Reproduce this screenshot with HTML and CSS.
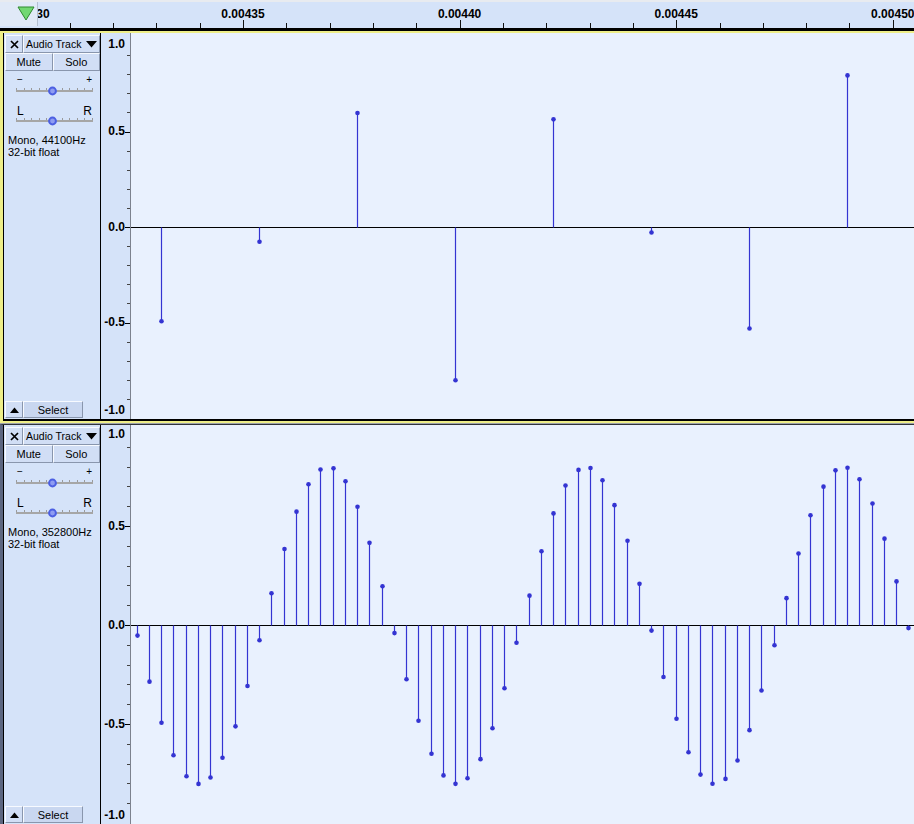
FILE: index.html
```html
<!DOCTYPE html>
<html>
<head>
<meta charset="utf-8">
<title>Audio Tracks</title>
<link rel="stylesheet" href="styles.css">
</head>
<body>
<div class="app">
  <div class="ruler">
    <div class="ruler-corner">
      <svg class="play-head" width="18" height="15" viewBox="0 0 18 15"><path d="M1 1H17L9 14Z" fill="#72d872" stroke="#2f8a2f" stroke-width="1"/></svg>
    </div>
    <div class="ruler-scale">
      <svg class="ruler-ticks" width="900" height="26"></svg>
      <span class="rlabel" style="left:-10px">0.00430</span>
      <span class="rlabel" style="left:205px">0.00435</span>
      <span class="rlabel" style="left:421.6px">0.00440</span>
      <span class="rlabel" style="left:638.2px">0.00445</span>
      <span class="rlabel" style="left:854.8px">0.00450</span>
    </div>
  </div>

  <div class="track track--focused">
    <div class="panel">
      <div class="row row-title">
        <div class="btn btn-close"><svg width="9" height="9" viewBox="0 0 9 9"><path d="M1 1L8 8M8 1L1 8" stroke="#000" stroke-width="1.7"/></svg></div>
        <div class="btn btn-name"><span>Audio Track</span><svg width="11" height="7" viewBox="0 0 11 7"><path d="M0 0H11L5.5 6.5Z" fill="#000"/></svg></div>
      </div>
      <div class="row row-toggles">
        <div class="btn btn-half">Mute</div>
        <div class="btn btn-half">Solo</div>
      </div>
      <div class="slider slider--gain">
        <div class="slider-labels"><span class="sign">−</span><span class="sign">+</span></div>
        <svg class="slider-track" width="77" height="10" viewBox="0 0 77 10"><path d="M0.5 2V4M8.5 2V4M15.5 2V4M23.5 2V4M30.5 2V4M38.5 2V4M46.5 2V4M53.5 2V4M61.5 2V4M68.5 2V4M76.5 2V4" stroke="#9a9a9a" stroke-width="1"/><rect x="0" y="4" width="77" height="2" fill="#a6a6a6"/><circle cx="36.5" cy="5" r="3.4" fill="#8e9cf2" stroke="#4c5fe2" stroke-width="2"/></svg>
      </div>
      <div class="slider slider--pan">
        <div class="slider-labels"><span>L</span><span>R</span></div>
        <svg class="slider-track" width="77" height="10" viewBox="0 0 77 10"><path d="M0.5 2V4M8.5 2V4M15.5 2V4M23.5 2V4M30.5 2V4M38.5 2V4M46.5 2V4M53.5 2V4M61.5 2V4M68.5 2V4M76.5 2V4" stroke="#9a9a9a" stroke-width="1"/><rect x="0" y="4" width="77" height="2" fill="#a6a6a6"/><circle cx="36.5" cy="5" r="3.4" fill="#8e9cf2" stroke="#4c5fe2" stroke-width="2"/></svg>
      </div>
      <div class="info">Mono, 44100Hz<br>32-bit float</div>
      <div class="spacer"></div>
      <div class="row row-bottom">
        <div class="btn btn-collapse"><svg width="9" height="6" viewBox="0 0 9 6"><path d="M0 6H9L4.5 0.5Z" fill="#000"/></svg></div>
        <div class="btn btn-select">Select</div>
      </div>
    </div>
    <div class="vruler">
      <svg class="vruler-ticks" width="29" height="400" data-cy="194" data-scale="191"></svg>
      <span class="vlabel" style="top:4px">1.0</span>
      <span class="vlabel" style="top:91px">0.5</span>
      <span class="vlabel" style="top:187px">0.0</span>
      <span class="vlabel" style="top:282px">-0.5</span>
      <span class="vlabel" style="top:370px">-1.0</span>
    </div>
    <div class="wave">
      <svg class="wave-svg" width="820" height="400" data-cy="194" data-scale="191" data-step="98"></svg>
    </div>
  </div>

  <div class="track-sep"></div>

  <div class="track track--plain">
    <div class="panel">
      <div class="row row-title">
        <div class="btn btn-close"><svg width="9" height="9" viewBox="0 0 9 9"><path d="M1 1L8 8M8 1L1 8" stroke="#000" stroke-width="1.7"/></svg></div>
        <div class="btn btn-name"><span>Audio Track</span><svg width="11" height="7" viewBox="0 0 11 7"><path d="M0 0H11L5.5 6.5Z" fill="#000"/></svg></div>
      </div>
      <div class="row row-toggles">
        <div class="btn btn-half">Mute</div>
        <div class="btn btn-half">Solo</div>
      </div>
      <div class="slider slider--gain">
        <div class="slider-labels"><span class="sign">−</span><span class="sign">+</span></div>
        <svg class="slider-track" width="77" height="10" viewBox="0 0 77 10"><path d="M0.5 2V4M8.5 2V4M15.5 2V4M23.5 2V4M30.5 2V4M38.5 2V4M46.5 2V4M53.5 2V4M61.5 2V4M68.5 2V4M76.5 2V4" stroke="#9a9a9a" stroke-width="1"/><rect x="0" y="4" width="77" height="2" fill="#a6a6a6"/><circle cx="36.5" cy="5" r="3.4" fill="#8e9cf2" stroke="#4c5fe2" stroke-width="2"/></svg>
      </div>
      <div class="slider slider--pan">
        <div class="slider-labels"><span>L</span><span>R</span></div>
        <svg class="slider-track" width="77" height="10" viewBox="0 0 77 10"><path d="M0.5 2V4M8.5 2V4M15.5 2V4M23.5 2V4M30.5 2V4M38.5 2V4M46.5 2V4M53.5 2V4M61.5 2V4M68.5 2V4M76.5 2V4" stroke="#9a9a9a" stroke-width="1"/><rect x="0" y="4" width="77" height="2" fill="#a6a6a6"/><circle cx="36.5" cy="5" r="3.4" fill="#8e9cf2" stroke="#4c5fe2" stroke-width="2"/></svg>
      </div>
      <div class="info">Mono, 352800Hz<br>32-bit float</div>
      <div class="spacer"></div>
      <div class="row row-bottom">
        <div class="btn btn-collapse"><svg width="9" height="6" viewBox="0 0 9 6"><path d="M0 6H9L4.5 0.5Z" fill="#000"/></svg></div>
        <div class="btn btn-select">Select</div>
      </div>
    </div>
    <div class="vruler">
      <svg class="vruler-ticks" width="29" height="400" data-cy="200" data-scale="198"></svg>
      <span class="vlabel" style="top:2px">1.0</span>
      <span class="vlabel" style="top:94px">0.5</span>
      <span class="vlabel" style="top:193px">0.0</span>
      <span class="vlabel" style="top:292px">-0.5</span>
      <span class="vlabel" style="top:383px">-1.0</span>
    </div>
    <div class="wave">
      <svg class="wave-svg" width="820" height="400" data-cy="200" data-scale="198" data-step="12.25"></svg>
    </div>
  </div>
</div>
<script src="script.js"></script>
</body>
</html>
```

FILE: styles.css
```css
* { box-sizing: border-box; }
html, body { margin: 0; padding: 0; }
body {
  width: 914px;
  height: 824px;
  overflow: hidden;
  background: #000;
  font-family: "Liberation Sans", Arial, sans-serif;
  font-size: 11px;
  color: #000;
}
.app { width: 940px; }

/* time ruler */
.ruler {
  display: flex;
  height: 31px;
  border-top: 2px solid #e8ebf0;
  border-bottom: 3px solid #000;
  background: #d5e3f9;
}
.ruler-corner {
  flex: none;
  width: 38px;
  height: 24px;
  background: #e0e9f7;
  border-right: 1px solid #b4bfd0;
  padding: 4px 0 0 17px;
}
.play-head { display: block; }
.ruler-scale {
  position: relative;
  flex: 1;
  overflow: hidden;
}
.ruler-ticks { position: absolute; left: 0; top: 0; }
.rlabel {
  position: absolute;
  top: 5px;
  transform: translateX(-50%);
  font-size: 12px;
  line-height: 14px;
  font-weight: bold;
  white-space: nowrap;
}

/* tracks */
.track {
  display: flex;
  background: #000;
  padding-left: 1px;
}
.track--focused {
  height: 392px;
  border: 2px solid #eeee88;
  border-left-width: 3px;
  border-right: none;
  padding-bottom: 2px;
}
.track--plain {
  height: 400px;
  border-top: 1px solid #30343c;
  border-left: 3px solid #5c6680;
}
.track-sep { height: 1px; background: #9ca2ac; }

.panel {
  flex: none;
  width: 96px;
  display: flex;
  flex-direction: column;
  padding: 2px 0 1px 1px;
  background: #d5e3f9;
}
.row { display: flex; flex: none; }
.row-title { height: 18px; }
.row-toggles { height: 18px; }
.row-bottom { height: 17px; }
.btn {
  display: flex;
  align-items: center;
  justify-content: center;
  background: #d1def5;
  border: 1px solid;
  border-color: #f7faff #8996ad #8996ad #f7faff;
  white-space: nowrap;
}
.btn-close { width: 18px; flex: none; }
.btn-name {
  flex: 1;
  justify-content: space-between;
  padding: 0 2px 0 2px;
  font-size: 10.5px;
}
.btn-half { flex: 1; }
.btn-collapse { width: 18px; flex: none; }
.btn-select { width: 60px; flex: none; background: #c9d7f0; }

.slider { width: 77px; margin: 3px 0 0 11px; }
.slider--pan { margin-top: 9px; }
.slider-labels {
  display: flex;
  justify-content: space-between;
  height: 12px;
  line-height: 12px;
  padding: 0 1px;
}
.slider--gain .slider-labels { font-size: 10px; }
.slider--pan .slider-labels { font-size: 12px; height: 11px; }
.slider-track { display: block; }

.info { margin: 8px 0 0 3px; line-height: 12px; }
.spacer { flex: 1; }

.vruler {
  position: relative;
  flex: none;
  width: 30px;
  margin-left: 1px;
  background: #d5e3f9;
  border-right: 1px solid #7c828e;
}
.vruler-ticks { position: absolute; left: 0; top: 0; }
.vlabel {
  position: absolute;
  right: 5px;
  font-size: 12px;
  line-height: 14px;
  font-weight: bold;
}
.wave {
  flex: 1;
  overflow: hidden;
  background: #e9f1fe;
}
.wave-svg { display: block; }
```

FILE: script.js
```js
(function () {
  var NS = 'http://www.w3.org/2000/svg';
  var WAVE_LEFT = 131;
  var RULER_LEFT = 38;
  var BLUE = '#3434d2';

  function sample(x) {
    return 0.8 * Math.cos(2 * Math.PI * (x - 327.3) / 257.9);
  }
  function el(name, attrs, parent) {
    var e = document.createElementNS(NS, name);
    for (var k in attrs) e.setAttribute(k, attrs[k]);
    parent.appendChild(e);
    return e;
  }

  // time ruler ticks
  document.querySelectorAll('.ruler-ticks').forEach(function (svg) {
    for (var n = -6; n <= 16; n++) {
      var px = 243 + 43.32 * n;
      var lx = Math.round(px - RULER_LEFT) + 0.5;
      var major = n % 5 === 0;
      el('line', { x1: lx, x2: lx, y1: major ? 18 : 21, y2: 26, stroke: '#111', 'stroke-width': 1 }, svg);
    }
  });

  // amplitude ruler ticks
  document.querySelectorAll('.vruler-ticks').forEach(function (svg) {
    var cy = +svg.dataset.cy, scale = +svg.dataset.scale;
    for (var k = -9; k <= 9; k++) {
      var y = Math.round(cy - k * 0.1 * scale) + 0.5;
      var major = k % 5 === 0;
      el('line', { x1: major ? 24 : 26, x2: 29, y1: y, y2: y, stroke: major ? '#000' : '#444', 'stroke-width': 1 }, svg);
    }
  });

  // waveform stems
  document.querySelectorAll('.wave-svg').forEach(function (svg) {
    var cy = +svg.dataset.cy, scale = +svg.dataset.scale, step = +svg.dataset.step;
    el('rect', { x: 0, y: cy, width: 820, height: 1, fill: '#000' }, svg);
    var start = 161 - step * Math.floor((161 - WAVE_LEFT) / step);
    for (var x = start; x < 940; x += step) {
      var lx = Math.round(x - WAVE_LEFT) + 0.5;
      var v = sample(x);
      var yEnd = cy + 0.5 - v * scale;
      el('line', { x1: lx, x2: lx, y1: cy + 0.5, y2: yEnd, stroke: BLUE, 'stroke-width': 1.2 }, svg);
      el('circle', { cx: lx, cy: yEnd, r: 2.3, fill: BLUE }, svg);
    }
  });
})();
```
